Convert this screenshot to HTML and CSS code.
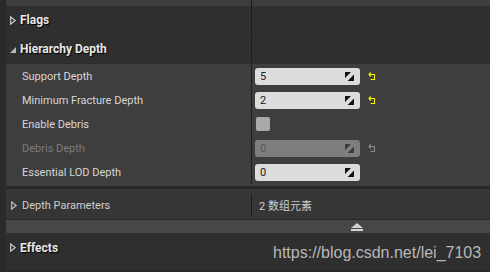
FILE: index.html
```html
<!DOCTYPE html>
<html lang="en">

<head>
  <meta charset="UTF-8">
  <title>Details - Hierarchy Depth</title>
  <link rel="stylesheet" href="styles.css">
</head>

<body>
  <div class="panel">
    <div class="top-strip">
      <div></div>
      <div class="value"></div>
    </div>

    <div class="category">
      <div class="name">
        <svg class="arrow" width="6" height="9" viewBox="0 0 6 9"><path d="M0.7 0.8 L5.2 4.5 L0.7 8.2 Z" fill="none" stroke="#d8d8d8" stroke-width="1.1"/></svg>
        <span>Flags</span>
      </div>
      <div class="value"></div>
    </div>

    <div class="category">
      <div class="name">
        <svg class="arrow" width="6" height="9" viewBox="0 0 6 9"><path d="M6 2 L6 8 L0 8 Z" fill="#b8b8b8"/></svg>
        <span>Hierarchy Depth</span>
      </div>
      <div class="value"></div>
    </div>

    <div class="props">
      <div class="row">
        <div class="name">Support Depth</div>
        <div class="value">
          <div class="num-box"><span>5</span><svg class="drag" width="9" height="9" viewBox="0 0 9 9"><path d="M0 0 H6 L0 6 Z M9 2.5 V9 H2.5 Z" fill="#111"/></svg></div>
          <svg class="reset" width="8" height="9" viewBox="0 0 8 9"><path d="M0.8 2.5 L3 0.5 M0.8 2.5 L3 4.5 M0.8 2.5 H6.5 V7.5 H2.5" fill="none" stroke="#f0f000" stroke-width="1.1"/></svg>
        </div>
      </div>
      <div class="row">
        <div class="name">Minimum Fracture Depth</div>
        <div class="value">
          <div class="num-box"><span>2</span><svg class="drag" width="9" height="9" viewBox="0 0 9 9"><path d="M0 0 H6 L0 6 Z M9 2.5 V9 H2.5 Z" fill="#111"/></svg></div>
          <svg class="reset" width="8" height="9" viewBox="0 0 8 9"><path d="M0.8 2.5 L3 0.5 M0.8 2.5 L3 4.5 M0.8 2.5 H6.5 V7.5 H2.5" fill="none" stroke="#f0f000" stroke-width="1.1"/></svg>
        </div>
      </div>
      <div class="row">
        <div class="name">Enable Debris</div>
        <div class="value">
          <div class="checkbox"></div>
        </div>
      </div>
      <div class="row disabled">
        <div class="name">Debris Depth</div>
        <div class="value">
          <div class="num-box"><span>0</span><svg class="drag" width="9" height="9" viewBox="0 0 9 9"><path d="M0 0 H6 L0 6 Z M9 2.5 V9 H2.5 Z" fill="#3a3a3a"/></svg></div>
          <svg class="reset" width="8" height="9" viewBox="0 0 8 9"><path d="M0.8 2.5 L3 0.5 M0.8 2.5 L3 4.5 M0.8 2.5 H6.5 V7.5 H2.5" fill="none" stroke="#8a8a8a" stroke-width="1.1"/></svg>
        </div>
      </div>
      <div class="row">
        <div class="name">Essential LOD Depth</div>
        <div class="value">
          <div class="num-box"><span>0</span><svg class="drag" width="9" height="9" viewBox="0 0 9 9"><path d="M0 0 H6 L0 6 Z M9 2.5 V9 H2.5 Z" fill="#111"/></svg></div>
        </div>
      </div>
    </div>

    <div class="array-row">
      <div class="name">
        <svg class="arrow" width="6" height="9" viewBox="0 0 6 9"><path d="M0.7 0.8 L5.2 4.5 L0.7 8.2 Z" fill="none" stroke="#c8c8c8" stroke-width="1.1"/></svg>
        <span>Depth Parameters</span>
      </div>
      <div class="value">
        <div class="value-inner">2 数组元素</div>
      </div>
    </div>

    <div class="eject-bar">
      <svg width="12" height="8" viewBox="0 0 12 8"><path d="M6 0 L12 5 H0 Z" fill="#d4d4d4"/><rect x="0" y="6" width="12" height="2" fill="#d4d4d4"/></svg>
    </div>

    <div class="category effects">
      <div class="name">
        <svg class="arrow" width="6" height="9" viewBox="0 0 6 9"><path d="M0.7 0.8 L5.2 4.5 L0.7 8.2 Z" fill="none" stroke="#d8d8d8" stroke-width="1.1"/></svg>
        <span>Effects</span>
      </div>
      <div class="value"></div>
    </div>
  </div>

  <div class="watermark">https://blog.csdn.net/lei_7103</div>
</body>

</html>
```

FILE: styles.css
```css
* {
  box-sizing: border-box;
  margin: 0;
  padding: 0;
}

body {
  width: 490px;
  height: 272px;
  overflow: hidden;
  background: #2a2a2a;
  font-family: Roboto, "Noto Sans CJK SC", sans-serif;
  position: relative;
}

.panel {
  margin-left: 6px;
}

.top-strip,
.category,
.row,
.array-row {
  display: grid;
  grid-template-columns: 245px 1fr;
}

.top-strip {
  height: 6px;
  background: #3d3d3d;
}

.value {
  border-left: 1px solid #1c1c1c;
  display: flex;
  align-items: center;
  padding-left: 3px;
  gap: 8px;
}

.category {
  height: 29px;
  background: #2f2f2f;
  border-bottom: 1px solid #2b2b2b;
}

.category .name {
  display: flex;
  align-items: center;
  padding-left: 4px;
  gap: 4px;
  font-size: 12px;
  font-weight: bold;
  color: #e8e8e8;
  text-shadow: 1px 1px 1px #000;
}

.category.effects {
  height: 37px;
  border-bottom: none;
  align-items: start;
}

.category.effects .name {
  height: 27px;
  padding-top: 2px;
}

.props {
  background: #3e3e3e;
  padding-bottom: 2px;
}

.row {
  height: 24px;
}

.row .name {
  display: flex;
  align-items: center;
  padding-left: 16px;
  font-size: 11px;
  color: #d6d6d6;
}

.num-box {
  width: 105px;
  height: 17px;
  background: #dcdcdc;
  border-radius: 3px;
  display: flex;
  align-items: center;
  justify-content: space-between;
  padding: 0 6px 0 5px;
  font-size: 11px;
  color: #1a1a1a;
}

.checkbox {
  width: 14px;
  height: 14px;
  margin-left: 1px;
  background: #a9a9a9;
  border-radius: 2px;
}

.row.disabled .name {
  color: #7c7c7c;
}

.row.disabled .num-box {
  background: #7e7e7e;
  color: #5c5c5c;
}

.array-row {
  height: 34px;
  background: #363636;
  border-top: 3px solid #282828;
  border-bottom: 1px solid #262626;
}

.array-row .name {
  display: flex;
  align-items: center;
  padding: 2px 0 0 5px;
  gap: 5px;
  font-size: 11px;
  color: #cfcfcf;
}

.array-row .value {
  border-left: none;
  padding: 2px 0 0 0;
}

.value-inner {
  height: 22px;
  border-left: 1px solid #1c1c1c;
  display: flex;
  align-items: center;
  padding-left: 7px;
  font-size: 11px;
  color: #cfcfcf;
}

.eject-bar {
  height: 13px;
  background: #474747;
  display: flex;
  align-items: center;
  padding-left: 345px;
}

.watermark {
  position: absolute;
  left: 273px;
  top: 244px;
  font-family: "Liberation Sans", Arial, sans-serif;
  font-size: 16px;
  color: rgba(220, 220, 220, 0.8);
}
```
